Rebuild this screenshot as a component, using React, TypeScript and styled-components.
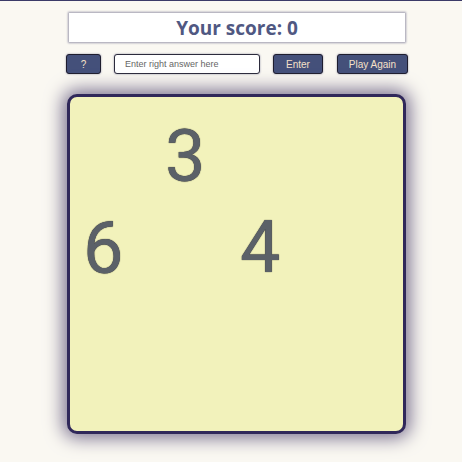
import React from "react";
import styled, { createGlobalStyle } from "styled-components";

const Global = createGlobalStyle`
  html, body { margin: 0; padding: 0; background: #faf8f2; }
  body { font-family: "Liberation Sans", Arial, sans-serif; }
`;

const Page = styled.div`
  min-height: 462px;
  box-sizing: border-box;
  border-top: 1px solid #3b3a68;
  display: flex;
  flex-direction: column;
  align-items: center;
  padding-top: 12px;
`;

const ScoreBox = styled.div`
  width: 336px;
  height: 29px;
  margin-left: 12px;
  box-sizing: border-box;
  background: #ffffff;
  box-shadow: 0 0 2px 1px #9c9aae;
  display: flex;
  align-items: center;
  justify-content: center;
  font-family: "Open Sans", sans-serif;
  font-weight: 700;
  font-size: 19px;
  color: #505882;
`;

const Controls = styled.div`
  display: flex;
  align-items: center;
  margin-top: 12px;
  margin-left: 12px;
`;

const Button = styled.button<{ $w: number; $gap?: number }>`
  width: ${(p) => p.$w}px;
  height: 20px;
  margin-right: ${(p) => p.$gap ?? 0}px;
  box-sizing: border-box;
  background: #44507a;
  border: 1px solid #1e1d2e;
  border-radius: 3px;
  box-shadow: 0 0 2px #8a88a0;
  color: #f6e0c8;
  font-family: "Liberation Sans", Arial, sans-serif;
  font-size: 10px;
  padding: 0;
`;

const Input = styled.input`
  width: 146px;
  height: 20px;
  margin-right: 13px;
  box-sizing: border-box;
  border: 1px solid #2c2b3c;
  border-radius: 3px;
  box-shadow: 0 0 2px #8a88a0;
  background: #ffffff;
  padding: 0 0 0 10px;
  font-family: "Liberation Sans", Arial, sans-serif;
  font-size: 9px;
  &::placeholder { color: #666; }
`;

const Board = styled.div`
  position: relative;
  margin-top: 20px;
  margin-left: 11px;
  width: 339px;
  height: 340px;
  box-sizing: border-box;
  background: #f2f2bb;
  border: 3px solid #30285a;
  border-radius: 10px;
  box-shadow: 0 0 18px 4px #79708f;
`;

const Digit = styled.span<{ $x: number; $y: number }>`
  position: absolute;
  left: ${(p) => p.$x}px;
  top: ${(p) => p.$y}px;
  font-family: Roboto, sans-serif;
  font-size: 72px;
  line-height: 1;
  color: #5b6168;
  text-shadow: 0 0 1px #111;
`;

export default function App() {
  return (
    <>
      <Global />
      <Page>
        <ScoreBox>Your score: 0</ScoreBox>
        <Controls>
          <Button $w={35} $gap={13}>?</Button>
          <Input placeholder="Enter right answer here" />
          <Button $w={50} $gap={14}>Enter</Button>
          <Button $w={71}>Play Again</Button>
        </Controls>
        <Board>
          <Digit $x={95} $y={24}>3</Digit>
          <Digit $x={13} $y={116}>6</Digit>
          <Digit $x={170} $y={115}>4</Digit>
        </Board>
      </Page>
    </>
  );
}
